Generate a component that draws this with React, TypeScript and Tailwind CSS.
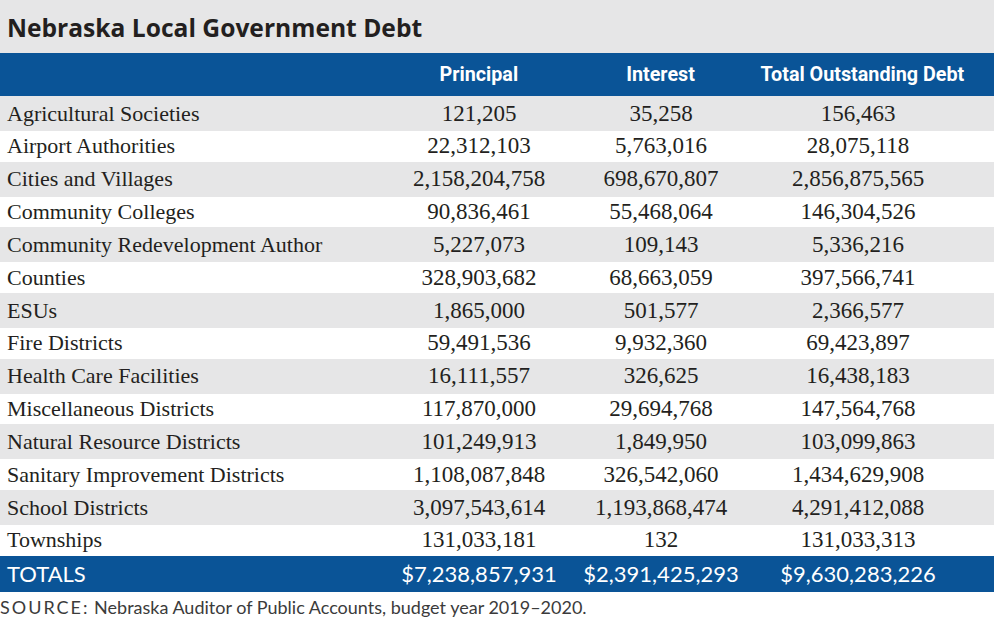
const rows = [
  ["Agricultural Societies", "121,205", "35,258", "156,463"],
  ["Airport Authorities", "22,312,103", "5,763,016", "28,075,118"],
  ["Cities and Villages", "2,158,204,758", "698,670,807", "2,856,875,565"],
  ["Community Colleges", "90,836,461", "55,468,064", "146,304,526"],
  ["Community Redevelopment Author", "5,227,073", "109,143", "5,336,216"],
  ["Counties", "328,903,682", "68,663,059", "397,566,741"],
  ["ESUs", "1,865,000", "501,577", "2,366,577"],
  ["Fire Districts", "59,491,536", "9,932,360", "69,423,897"],
  ["Health Care Facilities", "16,111,557", "326,625", "16,438,183"],
  ["Miscellaneous Districts", "117,870,000", "29,694,768", "147,564,768"],
  ["Natural Resource Districts", "101,249,913", "1,849,950", "103,099,863"],
  ["Sanitary Improvement Districts", "1,108,087,848", "326,542,060", "1,434,629,908"],
  ["School Districts", "3,097,543,614", "1,193,868,474", "4,291,412,088"],
  ["Townships", "131,033,181", "132", "131,033,313"],
];

const grid = "grid grid-cols-[390px_178px_186px_208px_1fr] items-center";

export default function App() {
  return (
    <div className="w-[997px] h-[617px] bg-white overflow-hidden text-[#231f20]">
      <div className="w-[994px] bg-[#e6e6e7]">
        {/* Title */}
        <div className="h-[53px] pl-[7px] pt-[13px] font-['Open_Sans','Liberation_Sans',sans-serif] font-bold text-[24.6px] leading-[30px] text-[#231f20] whitespace-nowrap">
          Nebraska Local Government Debt
        </div>

        {/* Header */}
        <div className={`${grid} h-[43px] bg-[#0a5497] text-white font-['Roboto','Liberation_Sans',sans-serif] font-bold text-[21px]`}>
          <div />
          <div className="text-center">
            <span className="inline-block scale-x-[0.94]">Principal</span>
          </div>
          <div className="text-center">
            <span className="inline-block scale-x-[0.94]">Interest</span>
          </div>
          <div className="text-center whitespace-nowrap pr-[8px]">
            <span className="inline-block scale-x-[0.94]">Total Outstanding Debt</span>
          </div>
          <div />
        </div>

        {/* Body rows */}
        {rows.map((r, i) => (
          <div
            key={r[0]}
            className={`${grid} font-['Liberation_Serif',serif] text-[23px] leading-[26px] ${
              i % 2 === 0 ? "h-[35px] bg-[#e6e6e7]" : "h-[30.7px] bg-white"
            }`}
          >
            <div className="pl-[7px] whitespace-nowrap text-[22px] leading-[26px]">{r[0]}</div>
            <div className="text-center">{r[1]}</div>
            <div className="text-center">{r[2]}</div>
            <div className="text-center">{r[3]}</div>
            <div />
          </div>
        ))}

        {/* Totals */}
        <div className={`${grid} h-[36px] bg-[#0a5497] text-white font-['Lato','Liberation_Sans',sans-serif] text-[22px]`}>
          <div className="pl-[7px]">TOTALS</div>
          <div className="text-center">$7,238,857,931</div>
          <div className="text-center">$2,391,425,293</div>
          <div className="text-center">$9,630,283,226</div>
          <div />
        </div>
      </div>

      {/* Source */}
      <div className="pt-[5px] font-['Lato','Liberation_Sans',sans-serif] text-[18px] leading-[20px] text-[#3b3b3b] whitespace-nowrap">
        <span className="tracking-[2px]">SOURCE:</span> Nebraska Auditor of Public Accounts, budget year 2019–2020.
      </div>
    </div>
  );
}
